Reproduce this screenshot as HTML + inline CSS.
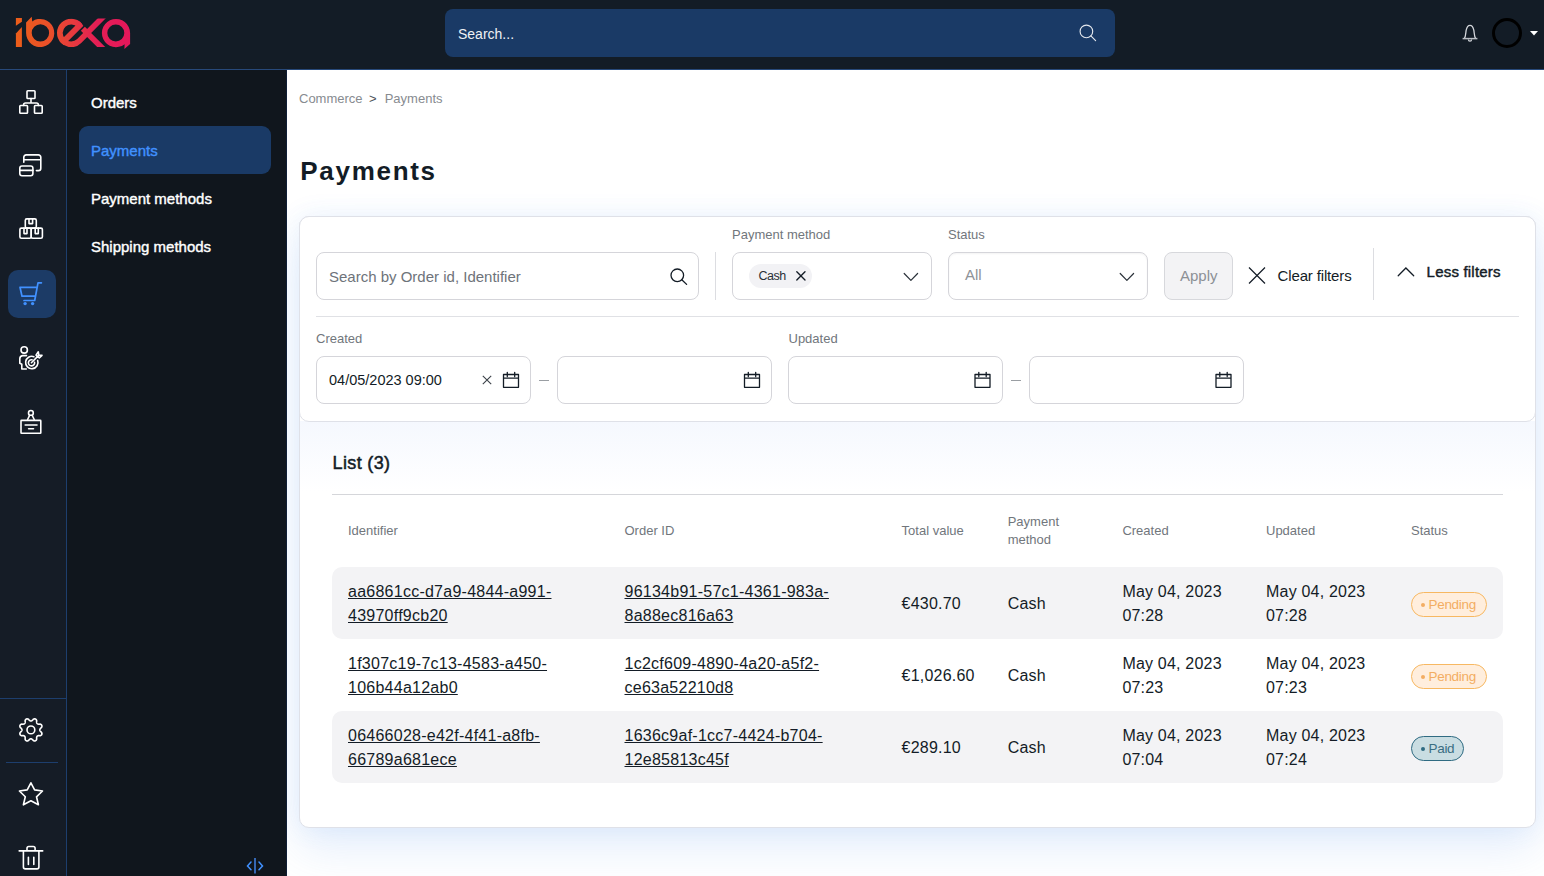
<!DOCTYPE html>
<html><head><meta charset="utf-8">
<style>
*{box-sizing:border-box;margin:0;padding:0}
html,body{width:1544px;height:876px;overflow:hidden;font-family:"Liberation Sans",sans-serif;color:#131c26;background:#fff}
.a{position:absolute;white-space:nowrap}
#hdr{position:absolute;left:0;top:0;width:1544px;height:70px;background:#131c26;border-bottom:1px solid #27497a}
#search{position:absolute;left:445px;top:9px;width:670px;height:48px;background:#1a3a66;border-radius:8px}
#rail{position:absolute;left:0;top:70px;width:67px;height:806px;background:#151c26;border-right:1px solid #1d3e6d}
#menu2{position:absolute;left:67px;top:70px;width:220px;height:806px;background:#10161d;border-right:1px solid #0f1e36}
#main{position:absolute;left:287px;top:70px;width:1257px;height:806px;background:#fff;overflow:hidden}
.mi{position:absolute;left:24px;font-size:15px;font-weight:400;-webkit-text-stroke:0.4px currentColor;color:#fff;white-space:nowrap;line-height:20px}
svg{position:absolute;overflow:visible}
.t{position:absolute;white-space:nowrap;line-height:1}
#content{position:absolute;left:287px;top:70px;width:1257px;height:806px;overflow:hidden}
#inner{position:absolute;left:-287px;top:-70px;width:1544px;height:876px}
.ic{fill:none;stroke:#fff;stroke-width:1.6;stroke-linecap:round;stroke-linejoin:round}
.inp{position:absolute;border:1px solid #d5d5da;border-radius:8px;background:#fff}
.lbl{position:absolute;font-size:13px;color:#71767c;white-space:nowrap}
.dk{fill:none;stroke:#131c26;stroke-width:1.3;stroke-linecap:round;stroke-linejoin:round}
.th{position:absolute;font-size:13px;color:#71767c;line-height:18px;margin-top:1px}
.row{position:absolute;left:45px;width:1171px;height:72px;border-radius:10px}
.td{position:absolute;font-size:16px;line-height:24px;color:#131c26;white-space:nowrap;letter-spacing:0.2px}
.td u{text-decoration:underline;text-underline-offset:1px;letter-spacing:0.25px}
.badge{position:absolute;height:24.5px;border-radius:12.5px;font-size:13.5px;letter-spacing:-0.3px;line-height:23px;padding-left:16.5px}
.badge:before{content:"";position:absolute;left:8.5px;top:10px;width:4px;height:4px;border-radius:2px}
.pend{border:1px solid #f7b862;background:#ffeedd;color:#f3ad62}
.pend:before{background:#f3ad62}
.paid{border:1px solid #2f6b82;background:#c9dde2;color:#3a6e82}
.paid:before{background:#2f6b82}
</style></head>
<body>
<div id="hdr">
  <svg style="left:0;top:0" width="140" height="70" viewBox="0 0 140 70">
    <defs><linearGradient id="lg" x1="16" y1="0" x2="130" y2="0" gradientUnits="userSpaceOnUse">
      <stop offset="0" stop-color="#ec5e1a"/><stop offset="0.3" stop-color="#ea4f2a"/><stop offset="0.5" stop-color="#e73a3e"/><stop offset="0.7" stop-color="#e51f55"/><stop offset="1" stop-color="#e4175b"/></linearGradient>
      <clipPath id="cy"><rect x="0" y="18.5" width="140" height="28.5"/></clipPath>
      <clipPath id="ce"><circle cx="71.2" cy="33" r="14.1"/></clipPath></defs>
    <g fill="url(#lg)">
      <polygon points="15.9,18 21.9,18 21.9,21.8 15.9,25.8"/>
      <polygon points="15.9,33.5 21.9,26.9 21.9,47 15.9,47"/>
      <path fill-rule="evenodd" d="M26.1,33 L26.1,22.5 L31.7,16.8 L32.2,21.4 A14.1,14.1 0 1 1 26.1,33 Z M31.7,32.9 A8.7,8.7 0 1 0 49.1,32.9 A8.7,8.7 0 1 0 31.7,32.9 Z"/>
      <path fill-rule="evenodd" d="M130.1,33 L130.1,43.9 L124.4,49.1 L124.6,44.2 A14.1,14.1 0 1 1 130.1,33 Z M107.3,32.9 A8.5,8.5 0 1 0 124.3,32.9 A8.5,8.5 0 1 0 107.3,32.9 Z"/>
      <polygon points="80.85,30.65 84.85,26.65 105.2,47 97.2,47"/>
    </g>
    <g fill="none" stroke="url(#lg)" stroke-width="5.7">
      <path clip-path="url(#cy)" d="M79.66,25.44 A11.35,11.35 0 1 0 79.23,41.03 L104,16"/>
      <line clip-path="url(#ce)" x1="60" y1="45.1" x2="84" y2="21.1"/>
    </g>
  </svg>
  <div id="search"><span class="t" style="left:13px;top:18.2px;font-size:14px;color:#eef1f5">Search...</span>
    <svg style="left:634px;top:15px" width="18" height="18" viewBox="0 0 18 18"><circle cx="7.4" cy="7.4" r="6.3" fill="none" stroke="#e4e8ee" stroke-width="1.15"/><line x1="11.9" y1="11.9" x2="16.6" y2="16.6" stroke="#e4e8ee" stroke-width="1.15" stroke-linecap="round"/></svg>
  </div>
  <svg style="left:1462px;top:24px" width="16" height="18" viewBox="0 0 16 18"><path d="M2.4,14.4 C3.8,12.6 3.7,8.5 4.2,6.2 C4.9,3 6.4,1.4 8,1.4 C9.6,1.4 11.1,3 11.8,6.2 C12.3,8.5 12.2,12.6 13.6,14.4" fill="none" stroke="#d4d7dc" stroke-width="1.3"/><line x1="0.6" y1="14.6" x2="15.4" y2="14.6" stroke="#b9bdc3" stroke-width="1.5"/><path d="M6.4,15.6 A1.6,1.6 0 0 0 9.6,15.6" fill="none" stroke="#d4d7dc" stroke-width="1.2"/></svg>
  <div class="a" style="left:1492px;top:18px;width:30px;height:30px;border:3px solid #000;border-radius:50%"></div>
  <svg style="left:1530px;top:31px" width="8" height="5" viewBox="0 0 8 5"><polygon points="0,0 8,0 4,4.5" fill="#fff"/></svg>
</div>

<div id="rail">
  <!-- sitemap -->
  <svg style="left:0;top:0" width="66" height="806" viewBox="0 70 66 806">
    <g class="ic">
      <rect x="27" y="90.8" width="8" height="7.7" rx="0.8"/>
      <rect x="19.8" y="105.5" width="7.7" height="7.8" rx="0.8"/>
      <rect x="34.5" y="105.5" width="7.7" height="7.8" rx="0.8"/>
      <path d="M31,98.5 V103 M23.6,105.5 V104.9 A1.9,1.9 0 0 1 25.5,103 H36.5 A1.9,1.9 0 0 1 38.4,104.9 V105.5"/>
      <!-- cards -->
      <path d="M23.8,162.3 V157.3 A2.4,2.4 0 0 1 26.2,154.9 H38.4 A2.4,2.4 0 0 1 40.8,157.3 V168.2 A2.4,2.4 0 0 1 38.4,170.6 H36.4 M23.8,159.7 H40.8"/>
      <rect x="19.8" y="166" width="13.1" height="9.8" rx="2.2"/>
      <path d="M19.8,170.4 H32.9"/>
      <!-- boxes -->
      <rect x="25.3" y="218.9" width="11" height="9.2" rx="1.5"/>
      <path d="M29,218.9 V223.6 H32.6 V218.9"/>
      <rect x="19.9" y="228.1" width="11.3" height="10.1" rx="1.5"/>
      <rect x="31.2" y="228.1" width="11.2" height="10.1" rx="1.5"/>
      <path d="M24,228.1 V233.6 H27 V228.1 M35.2,228.1 V233.6 H38.3 V228.1"/>
      <!-- target -->
      <circle cx="24.2" cy="349.9" r="3.2"/>
      <path d="M26.5,355.6 H22.6 C20.9,355.8 19.8,357.2 19.8,358.8 V363.2 L21.8,364.2 V369 H26.3"/>
      <path d="M37.63,360.38 A6.2,6.2 0 1 1 33.92,356.67"/>
      <path d="M34.55,362.26 A3.1,3.1 0 1 1 32.04,359.75"/>
      <path d="M31.4,362.7 L38.4,355.6 M36,355.2 L38.3,351.8 L38.8,355 L42,355.3 L39.3,357.9 Z"/>
      <!-- desk -->
      <circle cx="30.9" cy="412.9" r="2.4"/>
      <path d="M27.6,419.5 L29.6,415.4 M34.2,419.5 L32.2,415.4"/>
      <rect x="21" y="420.4" width="19.8" height="12.8" rx="0.5"/>
      <path d="M25.2,425 H37 M28.6,428.7 H33.5"/>
      <!-- gear -->
      <path d="M39.80,729.90 L39.82,730.13 L39.88,730.37 L39.97,730.61 L40.10,730.87 L40.28,731.13 L40.49,731.42 L40.78,731.73 L41.32,732.11 L41.58,732.46 L41.76,732.81 L41.87,733.15 L41.93,733.48 L41.94,733.81 L41.90,734.12 L41.80,734.42 L41.66,734.69 L41.47,734.94 L41.24,735.17 L40.96,735.36 L40.64,735.52 L40.27,735.64 L39.83,735.70 L39.18,735.59 L38.76,735.61 L38.40,735.66 L38.09,735.72 L37.82,735.81 L37.58,735.91 L37.37,736.04 L37.19,736.19 L37.04,736.37 L36.91,736.58 L36.81,736.82 L36.72,737.09 L36.66,737.40 L36.61,737.76 L36.59,738.18 L36.70,738.83 L36.64,739.27 L36.52,739.64 L36.36,739.96 L36.17,740.24 L35.94,740.47 L35.69,740.66 L35.42,740.80 L35.12,740.90 L34.81,740.94 L34.48,740.93 L34.15,740.87 L33.81,740.76 L33.46,740.58 L33.11,740.32 L32.73,739.78 L32.42,739.49 L32.13,739.28 L31.87,739.10 L31.61,738.97 L31.37,738.88 L31.13,738.82 L30.90,738.80 L30.67,738.82 L30.43,738.88 L30.19,738.97 L29.93,739.10 L29.67,739.28 L29.38,739.49 L29.07,739.78 L28.69,740.32 L28.34,740.58 L27.99,740.76 L27.65,740.87 L27.32,740.93 L26.99,740.94 L26.68,740.90 L26.38,740.80 L26.11,740.66 L25.86,740.47 L25.63,740.24 L25.44,739.96 L25.28,739.64 L25.16,739.27 L25.10,738.83 L25.21,738.18 L25.19,737.76 L25.14,737.40 L25.08,737.09 L24.99,736.82 L24.89,736.58 L24.76,736.37 L24.61,736.19 L24.43,736.04 L24.22,735.91 L23.98,735.81 L23.71,735.72 L23.40,735.66 L23.04,735.61 L22.62,735.59 L21.97,735.70 L21.53,735.64 L21.16,735.52 L20.84,735.36 L20.56,735.17 L20.33,734.94 L20.14,734.69 L20.00,734.42 L19.90,734.12 L19.86,733.81 L19.87,733.48 L19.93,733.15 L20.04,732.81 L20.22,732.46 L20.48,732.11 L21.02,731.73 L21.31,731.42 L21.52,731.13 L21.70,730.87 L21.83,730.61 L21.92,730.37 L21.98,730.13 L22.00,729.90 L21.98,729.67 L21.92,729.43 L21.83,729.19 L21.70,728.93 L21.52,728.67 L21.31,728.38 L21.02,728.07 L20.48,727.69 L20.22,727.34 L20.04,726.99 L19.93,726.65 L19.87,726.32 L19.86,725.99 L19.90,725.68 L20.00,725.38 L20.14,725.11 L20.33,724.86 L20.56,724.63 L20.84,724.44 L21.16,724.28 L21.53,724.16 L21.97,724.10 L22.62,724.21 L23.04,724.19 L23.40,724.14 L23.71,724.08 L23.98,723.99 L24.22,723.89 L24.43,723.76 L24.61,723.61 L24.76,723.43 L24.89,723.22 L24.99,722.98 L25.08,722.71 L25.14,722.40 L25.19,722.04 L25.21,721.62 L25.10,720.97 L25.16,720.53 L25.28,720.16 L25.44,719.84 L25.63,719.56 L25.86,719.33 L26.11,719.14 L26.38,719.00 L26.68,718.90 L26.99,718.86 L27.32,718.87 L27.65,718.93 L27.99,719.04 L28.34,719.22 L28.69,719.48 L29.07,720.02 L29.38,720.31 L29.67,720.52 L29.93,720.70 L30.19,720.83 L30.43,720.92 L30.67,720.98 L30.90,721.00 L31.13,720.98 L31.37,720.92 L31.61,720.83 L31.87,720.70 L32.13,720.52 L32.42,720.31 L32.73,720.02 L33.11,719.48 L33.46,719.22 L33.81,719.04 L34.15,718.93 L34.48,718.87 L34.81,718.86 L35.12,718.90 L35.42,719.00 L35.69,719.14 L35.94,719.33 L36.17,719.56 L36.36,719.84 L36.52,720.16 L36.64,720.53 L36.70,720.97 L36.59,721.62 L36.61,722.04 L36.66,722.40 L36.72,722.71 L36.81,722.98 L36.91,723.22 L37.04,723.43 L37.19,723.61 L37.37,723.76 L37.58,723.89 L37.82,723.99 L38.09,724.08 L38.40,724.14 L38.76,724.19 L39.18,724.21 L39.83,724.10 L40.27,724.16 L40.64,724.28 L40.96,724.44 L41.24,724.63 L41.47,724.86 L41.66,725.11 L41.80,725.38 L41.90,725.68 L41.94,725.99 L41.93,726.32 L41.87,726.65 L41.76,726.99 L41.58,727.34 L41.32,727.69 L40.78,728.07 L40.49,728.38 L40.28,728.67 L40.10,728.93 L39.97,729.19 L39.88,729.43 L39.82,729.67 Z"/>
      <circle cx="30.9" cy="729.9" r="3.9"/>
      <!-- star -->
      <path d="M30.9,782.8 L34.6,789.9 L42.5,791 L36.5,796.8 L38.4,804.8 L30.9,800.7 L23.4,804.8 L25.3,796.8 L19.4,791 L27.2,789.9 Z"/>
      <!-- trash -->
      <path d="M19.2,850.9 H42.7 M27,850.7 V848.3 A1.8,1.8 0 0 1 28.8,846.5 H33.3 A1.8,1.8 0 0 1 35.1,848.3 V850.7 M23.4,850.9 V867 A1.9,1.9 0 0 0 25.3,868.9 H37 A1.9,1.9 0 0 0 38.9,867 V850.9 M28.4,857.2 V864.5 M33.8,857.2 V864.5"/>
    </g>
    <line x1="0" y1="698.5" x2="66" y2="698.5" stroke="#1d3e6d" stroke-width="1"/>
    <line x1="6" y1="762.5" x2="58" y2="762.5" stroke="#1d3e6d" stroke-width="1"/>
  </svg>
  <div class="a" style="left:8px;top:200px;width:48px;height:48px;background:#1c3b66;border-radius:10px"></div>
  <svg style="left:8px;top:200px" width="48" height="48" viewBox="8 270 48 48">
    <g fill="none" stroke="#4191ff" stroke-width="1.7" stroke-linecap="round" stroke-linejoin="round">
      <path d="M41.4,282.8 H38 L34.7,300.5 H24 M20,287.3 H37.1 M20,287.3 L22,296.2 H35.5"/>
    </g>
    <circle cx="25.1" cy="303.6" r="1.7" fill="#4191ff"/><circle cx="32.6" cy="303.6" r="1.7" fill="#4191ff"/>
  </svg>
</div>

<div id="menu2">
  <div class="mi" style="top:23px">Orders</div>
  <div class="a" style="left:12px;top:56px;width:192px;height:48px;background:#1a3a66;border-radius:9px"></div>
  <div class="mi" style="top:71px;color:#4191ff">Payments</div>
  <div class="mi" style="top:119px">Payment methods</div>
  <div class="mi" style="top:167px">Shipping methods</div>
  <svg style="left:179px;top:787px" width="18" height="18" viewBox="0 0 18 18"><path d="M5,5.1 L1.5,8.9 L5,12.7 M13,5.1 L16.5,8.9 L13,12.7" fill="none" stroke="#4191ff" stroke-width="1.5" stroke-linecap="round"/><line x1="9" y1="1" x2="9" y2="16.5" stroke="#3a72c6" stroke-width="1.8"/></svg>
</div>

<div id="main"></div>
<div id="content"><div id="inner">
  <div class="t" style="left:299px;top:92.2px;font-size:13px;color:#878b90">Commerce</div>
  <div class="t" style="left:369px;top:92.2px;font-size:13px;color:#4c5258">&gt;</div>
  <div class="t" style="left:384.7px;top:92.2px;font-size:13px;color:#878b90">Payments</div>
  <div class="t" style="left:300.3px;top:158.2px;font-size:26px;font-weight:700;letter-spacing:1.7px;color:#131c26">Payments</div>

  <div class="a" style="left:299px;top:216px;width:1237px;height:612px;border:1px solid #dfe1e8;border-radius:10px;background:#fff;box-shadow:0 0 26px rgba(80,145,235,0.10),0 22px 44px rgba(80,145,235,0.14)"></div>
  <div class="a" style="left:300px;top:421px;width:1235px;height:120px;background:linear-gradient(#f5f8fe,#fff 70px)"></div>
  <div class="a" style="left:299px;top:216px;width:1237px;height:206px;border:1px solid #dfe1e8;border-radius:10px;background:#fff"></div>

  <!-- filters row -->
  <div class="inp" style="left:316px;top:252px;width:383px;height:48px"></div>
  <div class="t" style="left:329px;top:268.5px;font-size:15px;color:#6e737a">Search by Order id, Identifier</div>
  <svg style="left:670px;top:268px" width="18" height="17" viewBox="0 0 18 17"><circle cx="7.3" cy="7.3" r="6.3" class="dk"/><line x1="11.8" y1="11.8" x2="16.6" y2="16.4" class="dk"/></svg>
  <div class="a" style="left:715px;top:252px;width:1px;height:48px;background:#dcdde1"></div>

  <div class="t" style="left:732px;top:228.2px;font-size:13px;color:#71767c">Payment method</div>
  <div class="inp" style="left:732px;top:252px;width:200px;height:48px"></div>
  <div class="a" style="left:749px;top:264px;width:63px;height:24px;border-radius:12px;background:#f2f2f5"></div>
  <div class="t" style="left:758.4px;top:269.5px;font-size:12.5px;letter-spacing:-0.45px;color:#2a3038">Cash</div>
  <svg style="left:796px;top:271px" width="10" height="10" viewBox="0 0 10 10"><path d="M0.8,0.8 L9,9 M9,0.8 L0.8,9" fill="none" stroke="#131c26" stroke-width="1.35" stroke-linecap="round"/></svg>
  <svg style="left:903px;top:271.5px" width="16" height="10" viewBox="0 0 16 10"><path d="M1.2,1.5 L7.9,8.3 L14.6,1.5" class="dk" style="stroke-width:1.2;stroke:#2a3139"/></svg>

  <div class="t" style="left:948px;top:228.2px;font-size:13px;color:#71767c">Status</div>
  <div class="inp" style="left:948px;top:252px;width:200px;height:48px;box-shadow:inset 0 1px 2px rgba(0,0,0,0.05)"></div>
  <div class="t" style="left:965px;top:267px;font-size:15px;color:#8e9297">All</div>
  <svg style="left:1119px;top:271.5px" width="16" height="10" viewBox="0 0 16 10"><path d="M1.2,1.5 L7.9,8.3 L14.6,1.5" class="dk" style="stroke-width:1.2;stroke:#2a3139"/></svg>

  <div class="a" style="left:1164px;top:252px;width:69px;height:48px;border:1px solid #d7d8dc;border-radius:8px;background:#f3f3f5"></div>
  <div class="t" style="left:1180px;top:267.9px;font-size:15px;color:#8c9095">Apply</div>
  <svg style="left:1248px;top:266.5px" width="18" height="17" viewBox="0 0 18 17"><path d="M1,0.5 L17,16.5 M17,0.5 L1,16.5" fill="none" stroke="#131c26" stroke-width="1.2"/></svg>
  <div class="t" style="left:1277.6px;top:267.9px;font-size:15px;letter-spacing:-0.15px;color:#131c26">Clear filters</div>
  <div class="a" style="left:1373px;top:248px;width:1px;height:52px;background:#dcdde1"></div>
  <svg style="left:1397px;top:265.7px" width="18" height="11" viewBox="0 0 18 11"><path d="M1.2,9.8 L8.9,2 L16.7,9.8" fill="none" stroke="#131c26" stroke-width="1.25" stroke-linecap="round"/></svg>
  <div class="t" style="left:1426.6px;top:264.1px;font-size:15px;-webkit-text-stroke:0.45px #131c26;letter-spacing:0.2px;color:#131c26">Less filters</div>
  <div class="a" style="left:316px;top:316px;width:1203px;height:1px;background:#e0e1e5"></div>

  <!-- dates -->
  <div class="t" style="left:316px;top:332.4px;font-size:13px;color:#71767c">Created</div>
  <div class="t" style="left:788.5px;top:332.4px;font-size:13px;color:#71767c">Updated</div>
  <div class="inp" style="left:316px;top:356px;width:215px;height:48px"></div>
  <div class="inp" style="left:557px;top:356px;width:215px;height:48px"></div>
  <div class="inp" style="left:788px;top:356px;width:215px;height:48px"></div>
  <div class="inp" style="left:1029px;top:356px;width:215px;height:48px"></div>
  <div class="t" style="left:329px;top:373.2px;font-size:14.5px;color:#131c26">04/05/2023 09:00</div>
  <svg style="left:482px;top:374.7px" width="10" height="10" viewBox="0 0 10 10"><path d="M0.8,0.8 L9.2,9.2 M9.2,0.8 L0.8,9.2" fill="none" stroke="#3b4148" stroke-width="1.1"/></svg>
  <div class="a" style="left:539px;top:379.5px;width:10px;height:1px;background:#9a9ea3"></div>
  <div class="a" style="left:1011px;top:379.5px;width:10px;height:1px;background:#9a9ea3"></div>
  <svg style="left:0;top:0" width="1544" height="876" viewBox="0 0 1544 876">
    <g class="dk" style="stroke-width:1.3">
      <path id="cal" d="M503.5,374.5 H518.5 V387.3 H503.5 Z M503.5,378.2 H518.5 M507.3,372.3 V376.5 M514.7,372.3 V376.5"/>
      <use href="#cal" x="241"/><use href="#cal" x="471.5"/><use href="#cal" x="712.5"/>
    </g>
  </svg>

  <!-- list -->
  <div class="t" style="left:332.6px;top:453.5px;font-size:18px;-webkit-text-stroke:0.5px #131c26;letter-spacing:0.35px;color:#131c26">List (3)</div>
  <div class="a" style="left:332px;top:494px;width:1171px;height:1px;background:#d5d6da"></div>
  <div class="th" style="left:348px;top:520.6px">Identifier</div>
  <div class="th" style="left:624.5px;top:520.6px">Order ID</div>
  <div class="th" style="left:901.6px;top:520.6px">Total value</div>
  <div class="th" style="left:1007.7px;top:511.5px">Payment<br>method</div>
  <div class="th" style="left:1122.4px;top:520.6px">Created</div>
  <div class="th" style="left:1266px;top:520.6px">Updated</div>
  <div class="th" style="left:1411px;top:520.6px">Status</div>

  <div class="row" style="left:332px;top:567px;background:#f3f3f5"></div>
  <div class="row" style="left:332px;top:711px;background:#f3f3f5"></div>
  <div class="td" style="left:348px;top:580px"><u>aa6861cc-d7a9-4844-a991-</u><br><u>43970ff9cb20</u></div>
  <div class="td" style="left:624.5px;top:580px"><u>96134b91-57c1-4361-983a-</u><br><u>8a88ec816a63</u></div>
  <div class="td" style="left:901.6px;top:591.6px">€430.70</div>
  <div class="td" style="left:1007.7px;top:591.6px">Cash</div>
  <div class="td" style="left:1122.4px;top:580px">May 04, 2023<br>07:28</div>
  <div class="td" style="left:1266px;top:580px">May 04, 2023<br>07:28</div>
  <div class="badge pend" style="left:1411px;top:592px;width:76px">Pending</div>
  <div class="td" style="left:348px;top:652px"><u>1f307c19-7c13-4583-a450-</u><br><u>106b44a12ab0</u></div>
  <div class="td" style="left:624.5px;top:652px"><u>1c2cf609-4890-4a20-a5f2-</u><br><u>ce63a52210d8</u></div>
  <div class="td" style="left:901.6px;top:663.6px">€1,026.60</div>
  <div class="td" style="left:1007.7px;top:663.6px">Cash</div>
  <div class="td" style="left:1122.4px;top:652px">May 04, 2023<br>07:23</div>
  <div class="td" style="left:1266px;top:652px">May 04, 2023<br>07:23</div>
  <div class="badge pend" style="left:1411px;top:664px;width:76px">Pending</div>
  <div class="td" style="left:348px;top:724px"><u>06466028-e42f-4f41-a8fb-</u><br><u>66789a681ece</u></div>
  <div class="td" style="left:624.5px;top:724px"><u>1636c9af-1cc7-4424-b704-</u><br><u>12e85813c45f</u></div>
  <div class="td" style="left:901.6px;top:735.6px">€289.10</div>
  <div class="td" style="left:1007.7px;top:735.6px">Cash</div>
  <div class="td" style="left:1122.4px;top:724px">May 04, 2023<br>07:04</div>
  <div class="td" style="left:1266px;top:724px">May 04, 2023<br>07:24</div>
  <div class="badge paid" style="left:1411px;top:736px;width:53px">Paid</div>
</div></div>
</body></html>
